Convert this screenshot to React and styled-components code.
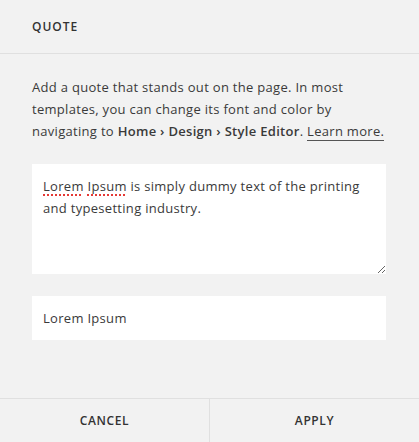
import React from "react";
import styled, { createGlobalStyle } from "styled-components";

const GlobalStyle = createGlobalStyle`
  * {
    box-sizing: border-box;
  }
  html, body {
    margin: 0;
    padding: 0;
    background: #f2f2f2;
  }
  body {
    font-family: "Open Sans", Lato, sans-serif;
    color: #3a3a3a;
    -webkit-font-smoothing: antialiased;
  }
`;

function App() {
  return (
    <>
      <GlobalStyle />
      <Panel>
        <Header>Quote</Header>
        <Body>
          <Description>
            Add a quote that stands out on the page. In most templates, you can
            change its font and color by navigating to{" "}
            <strong>Home › Design › Style Editor</strong>.{" "}
            <a href='#learn'>Learn more.</a>
          </Description>
          <QuoteBox spellCheck={false}>
            <Misspelled>Lorem</Misspelled> <Misspelled>Ipsum</Misspelled> is
            simply dummy text of the printing and typesetting industry.
          </QuoteBox>
          <Field defaultValue='Lorem Ipsum' spellCheck={false} />
        </Body>
        <Footer>
          <FooterButton>Cancel</FooterButton>
          <FooterButton>Apply</FooterButton>
        </Footer>
      </Panel>
    </>
  );
}

const Panel = styled.div`
  height: 100vh;
  display: flex;
  flex-direction: column;
  background: #f2f2f2;
`;

const Header = styled.div`
  height: 54px;
  display: flex;
  align-items: center;
  padding: 0 32px 1px;
  border-bottom: 1px solid #e0e0e0;
  font-size: 12px;
  font-weight: 600;
  letter-spacing: 1px;
  text-transform: uppercase;
  color: #333;
`;

const Body = styled.div`
  flex: 1;
  display: flex;
  flex-direction: column;
  gap: 22px;
  padding: 22px 33px 0 32px;
`;

const Description = styled.p`
  margin: 0;
  font-size: 13px;
  line-height: 22px;
  letter-spacing: 0.3px;

  strong {
    font-weight: 600;
  }

  a {
    color: inherit;
    text-decoration: none;
    border-bottom: 1px solid #555;
  }
`;

const QuoteBox = styled.div`
  height: 110px;
  padding: 11px;
  background: #fff;
  font-size: 13px;
  line-height: 22px;
  letter-spacing: 0.3px;
  resize: vertical;
  overflow: auto;
`;

const Misspelled = styled.span`
  text-decoration: underline dotted #e53935;
  text-decoration-thickness: 2px;
  text-underline-offset: 3px;
`;

const Field = styled.input`
  height: 44px;
  padding: 0 11px;
  border: none;
  outline: none;
  background: #fff;
  font-family: inherit;
  font-size: 13px;
  letter-spacing: 0.3px;
  color: #3a3a3a;
`;

const Footer = styled.div`
  display: grid;
  grid-template-columns: 209px 1fr;
  border-top: 1px solid #e0e0e0;
`;

const FooterButton = styled.button`
  height: 43px;
  border: none;
  background: transparent;
  font-family: inherit;
  font-size: 12px;
  font-weight: 600;
  letter-spacing: 0.6px;
  text-transform: uppercase;
  color: #333;
  cursor: pointer;

  & + & {
    border-left: 1px solid #e0e0e0;
  }
`;

export default App;
